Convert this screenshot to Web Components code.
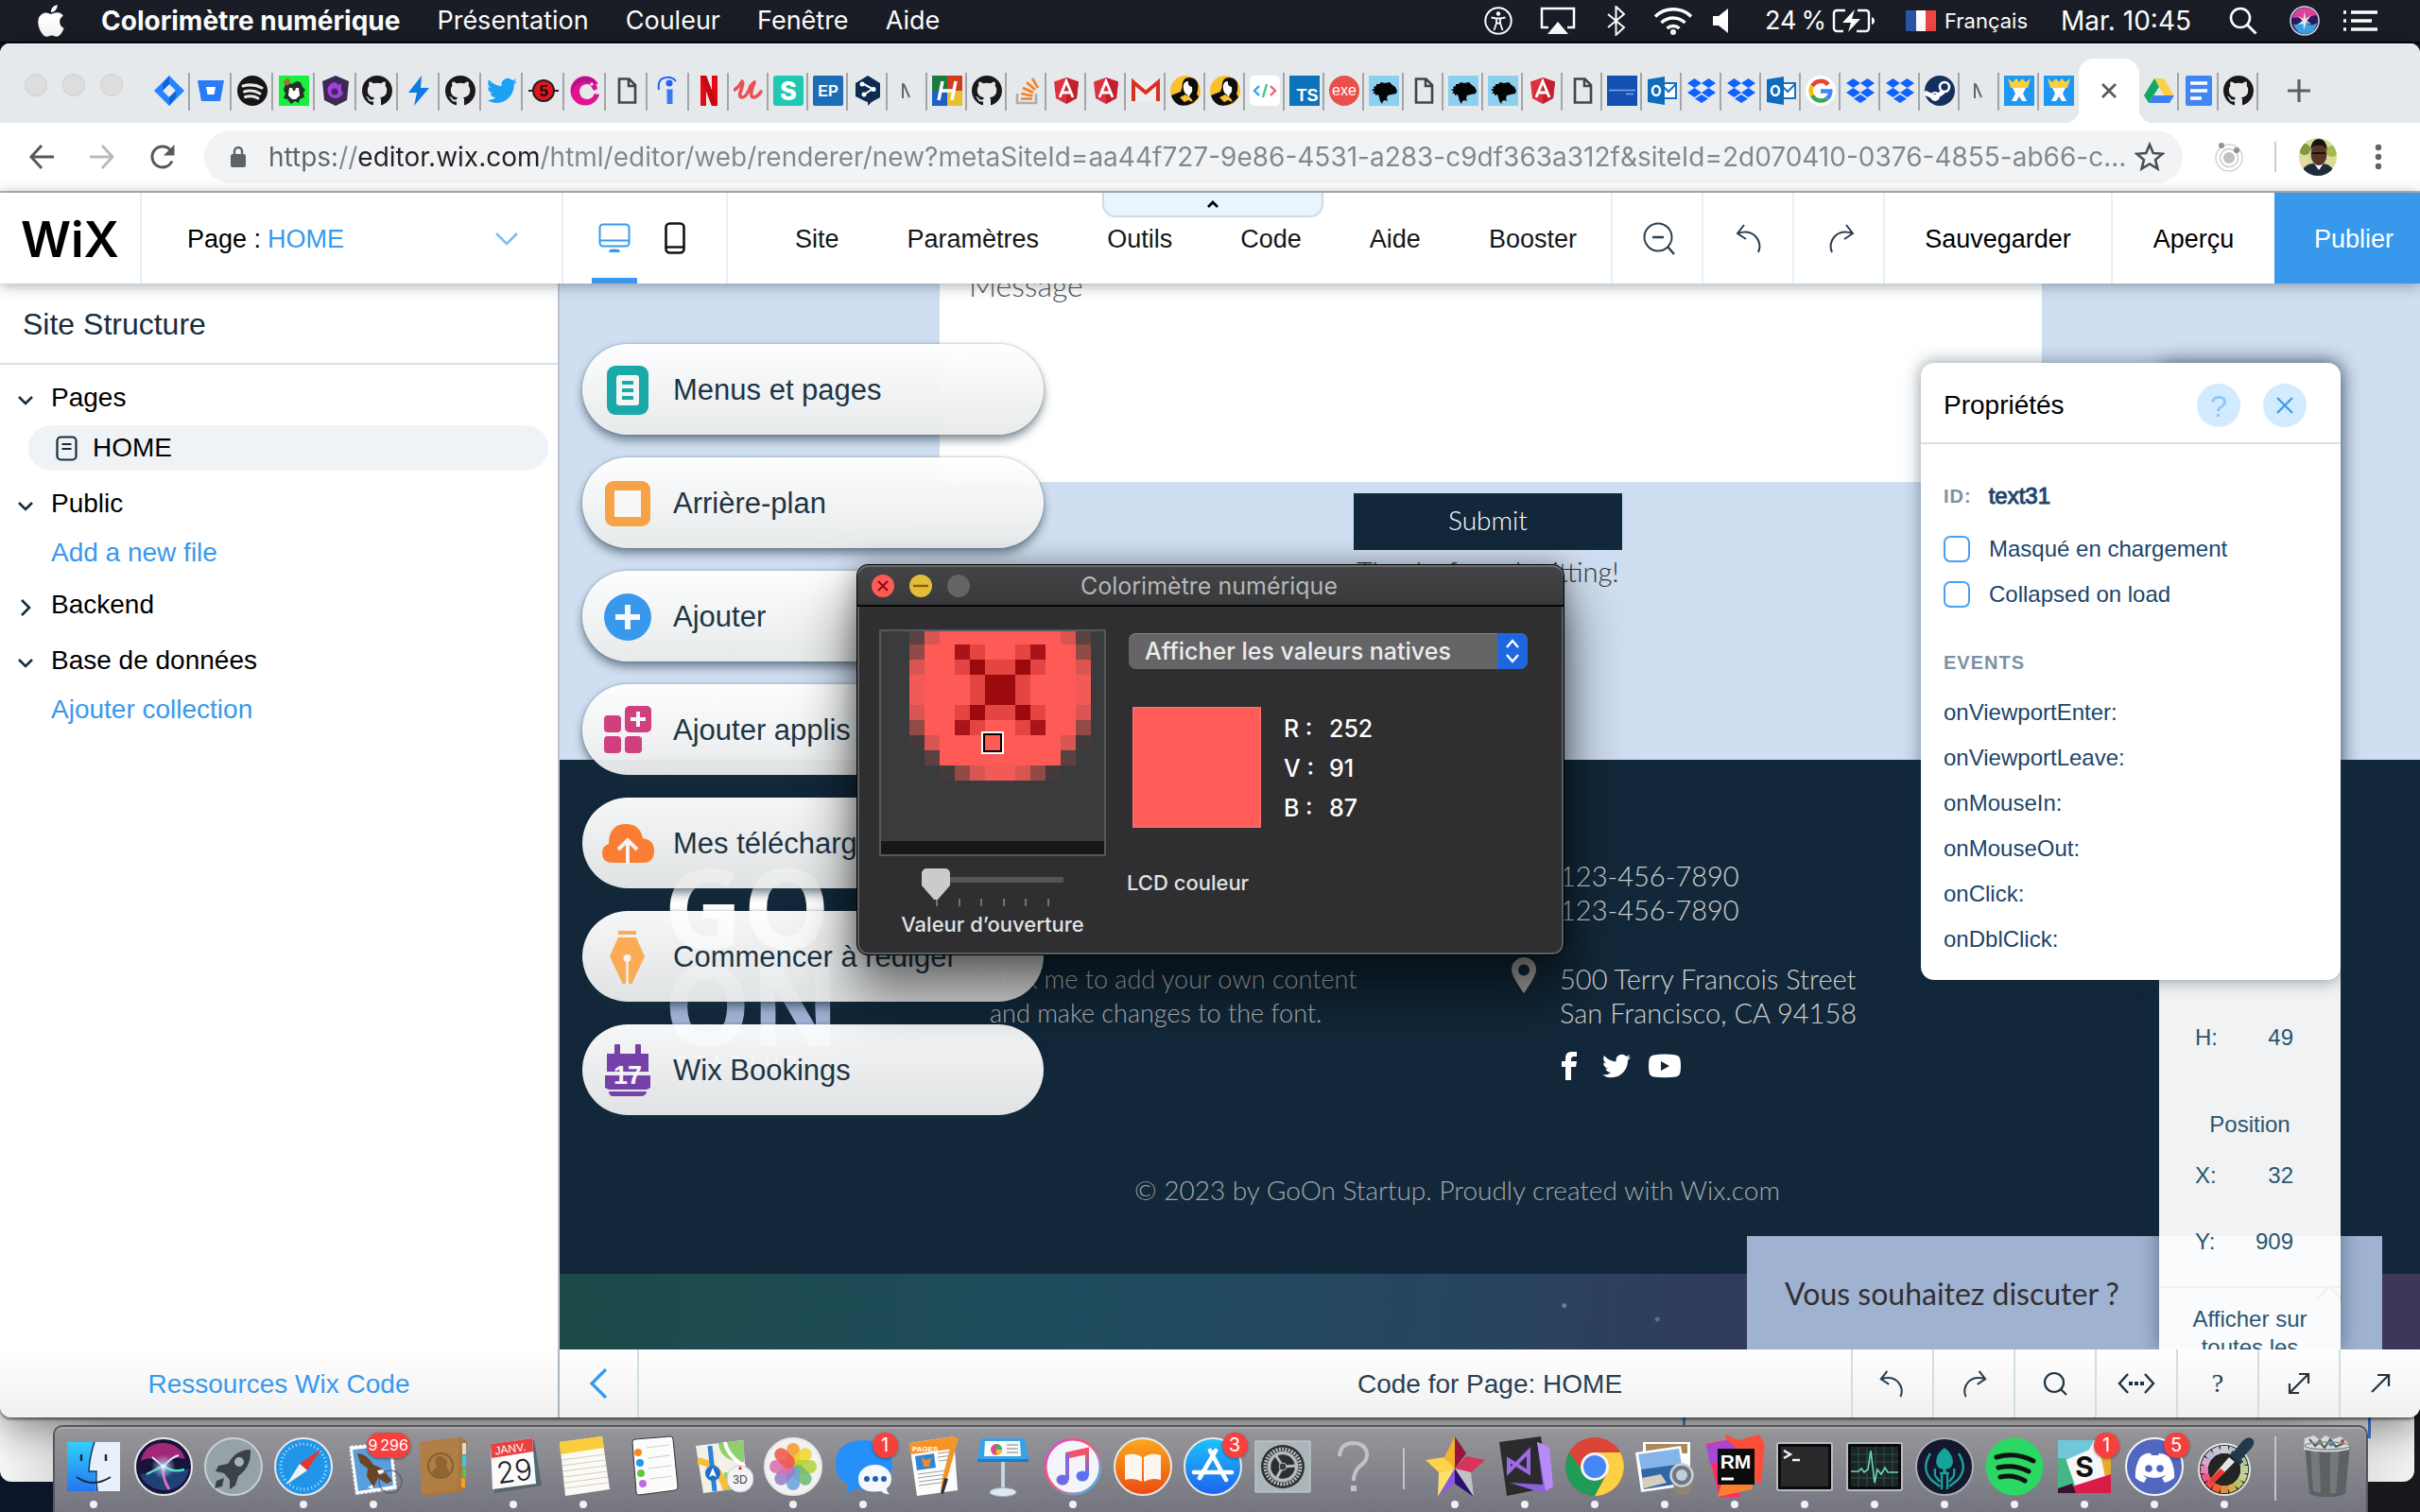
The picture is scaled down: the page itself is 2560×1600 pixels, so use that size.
<!DOCTYPE html>
<html lang="fr">
<head>
<meta charset="utf-8">
<title>Wix Editor</title>
<style>
  html, body { margin: 0; height: 100%; }
  body { overflow: hidden; font-family: "Liberation Sans", Arial, sans-serif; }
</style>
</head>
<body>
<mac-desktop>
  <mac-menubar slot="menubar"></mac-menubar>
  <browser-window slot="browser">
    <tab-strip></tab-strip>
    <address-bar></address-bar>
    <wix-header></wix-header>
    <editor-area></editor-area>
    <code-bar></code-bar>
  </browser-window>
  <color-meter slot="window"></color-meter>
  <mac-dock slot="dock"></mac-dock>
</mac-desktop>

<script>
const GITHUB = 'M8 0C3.58 0 0 3.58 0 8c0 3.54 2.29 6.53 5.47 7.59.4.07.55-.17.55-.38 0-.19-.01-.82-.01-1.49-2.01.37-2.53-.49-2.69-.94-.09-.23-.48-.94-.82-1.13-.28-.15-.68-.52-.01-.53.63-.01 1.08.58 1.23.82.72 1.21 1.87.87 2.33.66.07-.52.28-.87.51-1.07-1.78-.2-3.64-.89-3.64-3.95 0-.87.31-1.59.82-2.15-.08-.2-.36-1.02.08-2.12 0 0 .67-.21 2.2.82.64-.18 1.32-.27 2-.27.68 0 1.36.09 2 .27 1.53-1.04 2.2-.82 2.2-.82.44 1.1.16 1.92.08 2.12.51.56.82 1.27.82 2.15 0 3.07-1.87 3.75-3.65 3.95.29.25.54.73.54 1.48 0 1.07-.01 1.93-.01 2.2 0 .21.15.46.55.38A8.013 8.013 0 0016 8c0-4.42-3.58-8-8-8z';
const TWITTER = 'M23.953 4.57a10 10 0 01-2.825.775 4.958 4.958 0 002.163-2.723c-.951.555-2.005.959-3.127 1.184a4.92 4.92 0 00-8.384 4.482C7.69 8.095 4.067 6.13 1.64 3.162a4.822 4.822 0 00-.666 2.475c0 1.71.87 3.213 2.188 4.096a4.904 4.904 0 01-2.228-.616v.06a4.923 4.923 0 003.946 4.827 4.996 4.996 0 01-2.212.085 4.936 4.936 0 004.604 3.417 9.867 9.867 0 01-6.102 2.105c-.39 0-.779-.023-1.17-.067a13.995 13.995 0 007.557 2.209c9.053 0 13.998-7.496 13.998-13.985 0-.21 0-.42-.015-.63A9.935 9.935 0 0024 4.59z';
const APPLE = 'M12.152 6.896c-.948 0-2.415-1.078-3.96-1.04-2.04.027-3.91 1.183-4.961 3.014-2.117 3.675-.546 9.103 1.519 12.09 1.013 1.454 2.208 3.09 3.792 3.039 1.52-.065 2.09-.987 3.935-.987 1.831 0 2.35.987 3.96.948 1.637-.026 2.676-1.48 3.676-2.948 1.156-1.688 1.636-3.325 1.662-3.415-.039-.013-3.182-1.221-3.22-4.857-.026-3.04 2.48-4.494 2.597-4.559-1.429-2.09-3.623-2.324-4.39-2.376-2-.156-3.675 1.09-4.61 1.09zM15.53 3.83c.843-1.012 1.4-2.427 1.245-3.83-1.207.052-2.662.805-3.532 1.818-.78.896-1.454 2.338-1.273 3.714 1.338.104 2.715-.688 3.559-1.701';

const svg = (w, h, vb, body, extra = '') =>
  `<svg width="${w}" height="${h}" viewBox="${vb}" fill="none" aria-hidden="true" ${extra}>${body}</svg>`;

function define(name, css, html) {
  const tpl = document.createElement('template');
  tpl.innerHTML = `<style>
    :host { display: block; box-sizing: border-box; }
    *, *::before, *::after { box-sizing: border-box; }
    svg { display: block; flex: none; }
    button, input, select { font: inherit; color: inherit; border: 0; margin: 0; padding: 0; background: none; }
    a { color: inherit; text-decoration: none; }
    ${css}</style>${html}`;
  customElements.define(name, class extends HTMLElement {
    constructor() {
      super();
      this.attachShadow({ mode: 'open' }).append(tpl.content.cloneNode(true));
    }
  });
}

/* ---------- desktop ---------- */
define('mac-desktop', `
  :host { position: relative; height: 100vh; background: linear-gradient(90deg, #0b1628 0 50%, #17181b); display: flex; flex-direction: column; overflow: hidden; }
  .back { position: absolute; left: 0; right: 6px; bottom: 32px; height: 90px; border-radius: 0 0 12px 12px;
    background: linear-gradient(90deg, #f6f6f6, #c6c6c6 110px, #c6c6c6 calc(100% - 140px), #f2f2f2); }
  .line { position: absolute; bottom: 78px; height: 26px; width: 3px; background: #3b74d8; }
  .main { position: relative; flex: 1; min-height: 0; margin-bottom: 100px; display: flex; }
  ::slotted(browser-window) { flex: 1; min-width: 0; }
  .dock { position: absolute; left: 56px; right: 55px; bottom: 0; }
  .win { position: absolute; left: 906px; top: 597px; }
`, `
  <div class="back"></div><i class="line" style="left:1780px"></i><i class="line" style="right:52px"></i>
  <slot name="menubar"></slot>
  <div class="main"><slot name="browser"></slot></div>
  <div class="win"><slot name="window"></slot></div>
  <div class="dock"><slot name="dock"></slot></div>
`);

/* ---------- menu bar ---------- */
define('mac-menubar', `
  :host { height: 46px; background: #1a1d26; color: #fff; font: 27px/44px Inter, sans-serif; display: flex; justify-content: space-between; border-bottom: 2px solid #04060c; position: relative; }
  nav, .status { display: flex; align-items: center; }
  nav { padding-left: 40px; gap: 39px; }
  nav b { font-weight: 700; font-size: 28px; }
  .status { padding-right: 45px; }
  .lang { font-size: 22px; }
  .time { font-size: 28px; }
  .flag { width: 32px; height: 22px; background: linear-gradient(90deg, #2b56a5 33%, #fff 33% 66%, #f04545 66%); }
`, `
  <nav>
    ${svg(28, 34, '2 0 20 24', `<path fill="#fff" d="${APPLE}"/>`)}
    <b>Colorimètre numérique</b><span>Présentation</span><span>Couleur</span><span>Fenêtre</span><span>Aide</span>
  </nav>
  <div class="status">
    ${svg(30, 30, '0 0 30 30', '<circle cx="15" cy="15" r="13.700" stroke="#fff" stroke-width="2"/><circle cx="15" cy="7.500" r="2.200" fill="#fff"/><path d="M7.500 11.500l5.500 1v5l-2.500 7.500M22.500 11.500l-5.500 1v5l2.500 7.500M13 12.500h4M13 17.500h4" stroke="#fff" stroke-width="1.800"/>', 'style="margin-right:29px"')}
    ${svg(38, 30, '0 0 38 30', '<path d="M9 22H2V2h34v20h-7" stroke="#fff" stroke-width="2.500"/><path d="M19 16l11 13H8z" fill="#fff"/>', 'style="margin-right:33px"')}
    ${svg(20, 32, '0 0 20 32', '<path d="M1 9l17 14-8.500 8V1L18 9 1 23" stroke="#fff" stroke-width="2"/>', 'style="margin-right:29px"')}
    ${svg(42, 30, '0 0 42 30', '<path d="M2 10.500a27 27 0 0138 0M8.500 17a18 18 0 0125 0M14.500 23a9.500 9.500 0 0113 0" stroke="#fff" stroke-width="3.400"/><circle cx="21" cy="27" r="3" fill="#fff"/>', 'style="margin-right:20px"')}
    ${svg(18, 28, '0 0 18 28', '<path d="M1 9h6l10-8v26L7 19H1z" fill="#fff"/>', 'style="margin-right:38px"')}
    <span style="margin-right:6px">24&#8239;%</span>
    ${svg(46, 26, '0 0 46 26', '<path d="M14 2H5a3 3 0 00-3 3v16a3 3 0 003 3h7M27 2h9a3 3 0 013 3v16a3 3 0 01-3 3H26" stroke="#fff" stroke-width="2.400"/><path d="M42 9q3 1 3 4t-3 4z" fill="#fff"/><path d="M24 1L11 15h9l-3 10 13-14h-9z" fill="#fff"/>', 'style="margin-right:32px"')}
    <i class="flag" style="margin-right:9px"></i>
    <span class="lang" style="margin-right:35px">Français</span>
    <span class="time" style="margin-right:40px">Mar. 10:45</span>
    ${svg(30, 30, '0 0 30 30', '<circle cx="12" cy="12" r="10" stroke="#fff" stroke-width="2.600"/><path d="M19.500 19.500l9 9" stroke="#fff" stroke-width="3"/>', 'style="margin-right:34px"')}
    ${svg(32, 32, '0 0 32 32', '<circle cx="16" cy="16" r="15" fill="#2a1c5a" stroke="#d8d8e8" stroke-width="1.500"/><path d="M3 13q2-10 13-11 10 0 13 8-8 0-13 6-5-5-13-3" fill="#d9449a"/><path d="M4 20q6 0 12-4 6 8 13 2-2 12-13 12-8 0-12-10" fill="#3aa6e8"/><path d="M16 6l1 8 6-4-4.500 6 5 4-6-2L15 26l-.500-7-6 1 5-4-4-5 5 3z" fill="#fff" opacity=".85"/>', 'style="margin-right:25px"')}
    ${svg(36, 22, '0 0 36 22', '<path d="M0 2h3M0 11h3M0 20h3M8 2h28M8 11h22M8 20h28" stroke="#fff" stroke-width="3.600"/>')}
  </div>
`);

/* ---------- browser ---------- */
define('browser-window', `
  :host { display: flex; flex-direction: column; background: #fff; border-radius: 10px 10px 12px 12px; overflow: hidden; box-shadow: 0 2px 3px rgba(0,0,0,.55), 0 12px 40px rgba(0,0,0,.4); }
  ::slotted(editor-area) { flex: 1; min-height: 0; }
`, `<slot></slot>`);

const doc = '<path d="M8 3.500h10.500L25 10v18.500H8z M18 3.500V11h7" stroke="#444" stroke-width="2.600"/>';
const gh = `<g transform="scale(2)"><path fill="#1b1817" d="${GITHUB}"/></g>`;
const ang = '<path d="M16 2l13 4.500-2 17.500L16 30 5 24 3 6.500z" fill="#dd3040"/><path d="M16 2l13 4.500-2 17.500L16 30z" fill="#c3202f"/><path d="M9 23l7-17 7 17M11.500 18h9" stroke="#fff" stroke-width="2.800"/>';
const drop = '<path d="M8.500 3L16 8l-7.500 5L1 8zM23.500 3L31 8l-7.500 5L16 8zM8.500 13L16 18l-7.500 5L1 18zM23.500 13L31 18l-7.500 5L16 18zM16 20l7 4.500-7 4.500-7-4.500z" fill="#0f62fe"/>';
const outl = '<path d="M14 8h17v16H14z" fill="#fff" stroke="#1672c4" stroke-width="2"/><path d="M15 9l8 8 8-8" stroke="#1672c4" stroke-width="2"/><path d="M1 4l18-3v30L1 28z" fill="#0f6cbd"/><ellipse cx="10" cy="16" rx="4" ry="5" stroke="#fff" stroke-width="2.600"/>';
const bird = '<path fill="#8ccfee" d="M0 0h32v32H0z"/><path d="M3 15l3-1-1-2 3-1 0-2 3 0 2-2 4 1 5-1 3 3 3 2 2 4-1 3-5 1-4 1-1 3 1 3-3-1-2 1-1 3-2-3-1-4-1-3-3 1 0-2-3 0 2-2z" fill="#050505"/>';
const nn = '<path d="M11 8v16M12 9l6 14" stroke="#666" stroke-width="2"/>';
const wx = '<path fill="#1e98f5" d="M0 0h32v32H0z"/><path d="M4 3l5 4 4-4 3 4 3-4 4 4 5-4-3 10H7z" fill="#fbd03b"/><path d="M9 13h14l-3 6 4 8h-5l-3-5-3 5H8l4-8z" fill="#fff"/>';
const duo = '<circle cx="16" cy="16" r="16" fill="#fbc02d"/><path d="M1 21l10-4q2-4 2-9 1-6 7-6 7 0 9 6 1 6-1 11l2 4-6 6q-8 4-15 2Q3 28 1 21" fill="#0d0d0d"/><path d="M14 10q1-4 5-4-1 5 4 6 1 4-1 7-3 2-6 0-3-4-2-9z" fill="#fff"/><path d="M10 23l6-3 6 4 2 4-5-2-4 2z" fill="#fbc02d"/><path d="M16 18l5 1-1 4z" fill="#fff"/>';
const t = (s, x, y, size, fill, w = 700, fam = 'Liberation Sans') =>
  `<text x="${x}" y="${y}" font-family="${fam}" font-size="${size}" font-weight="${w}" fill="${fill}" text-anchor="middle">${s}</text>`;
const spot = (c, k) => `<circle cx="16" cy="16" r="16" fill="${c}"/><path d="M6 11q11-3 20 2M7.500 17q9-2.500 16.500 2M8.500 22.500q7.500-2 13.500 1.500" stroke="${k}" stroke-width="3" stroke-linecap="round"/>`;
const WIDE = [
  '<path d="M16 0l16 16-16 16L0 16z" fill="#2684ff"/><path d="M16 9l7 7-7 7-7-7z" fill="#e5e9ec"/><path d="M16 0l-7 9v7l7-7z" fill="#1360d8"/><path d="M16 32l7-9v-7l-7 7z" fill="#1360d8"/>',
  '<path d="M2 5h28l-4 22H6z" fill="#2a7bf5"/><path d="M11 12h10l-1.500 8h-7z" fill="#fff"/>',
  spot('#191414', '#e5e9ec'),
  '<path fill="#19f03c" d="M0 0h32v32H0z"/><path d="M8 6l5 3 6-3 4 1 2 5 3 3-2 3 1 5-5 2-1 4-4-2-4 3-4-5-4-1 2-5-2-4z" fill="#26302a"/><path d="M11 13h3l1 3h2l1-3h3l1 8-4 4h-4l-4-4z" fill="#fff"/><path d="M4 7l6-5 2 6-3 3z" fill="#a86a3c"/>',
  '<path d="M16 0l14 6-2 20-12 6L4 26 2 6z" fill="#3c2a55"/><path d="M16 7a8.500 8.500 0 108 11l-2-2V8l-3 2z" fill="#a63ee0"/><circle cx="15" cy="17" r="3.500" fill="#3c2a55"/>',
  gh,
  '<path d="M19 0L5 18h9l-3 14 16-19h-9z" fill="#0f7be0"/>',
  gh,
  `<g transform="scale(1.333)"><path fill="#1da1f2" d="${TWITTER}"/></g>`,
  `<path d="M0 16h32" stroke="#222" stroke-width="2"/><circle cx="16" cy="16" r="11" fill="#e6141e" stroke="#222" stroke-width="2"/>${t('5', 16, 22, 17, '#111')}`,
  '<circle cx="16" cy="16" r="15.500" fill="#e0148c"/><path d="M24 3q-9-5-17 2-6 6-6 13 6-12 15-11 6 1 8 6 6-5 0-10" fill="#b5118a"/><circle cx="18" cy="17" r="8" fill="#e5e9ec"/><path d="M22 11l10-3 1 12-8-1z" fill="#e5e9ec"/><path d="M18 6q10-1 11 8l-4 2-3-5z" fill="#d4149a"/><circle cx="23" cy="9" r="1.500" fill="#fff"/>',
  doc,
  '<circle cx="17" cy="8" r="3.500" fill="#2164f3"/><path d="M14.500 14q3 1 6 0v16h-6z" fill="#3a78f5"/><path d="M6 15Q4 3 14 2q6-1 10 4" stroke="#2164f3" stroke-width="2"/>',
];
const NARROW = [
  '<path d="M7 0h6l12 32h-6z" fill="#b1060f"/><path d="M7 0h6v32H7zM19 0h6v32h-6z" fill="#e50914"/><path d="M7 0h6l12 32h-6z" fill="#c40812"/>',
  '<path d="M1 15q5-3 8-9 2 1-1 9-3 8 1 8 5 0 9-12l4-4q-6 15-1 16 4 0 8-6" stroke="#ea5252" stroke-width="3.600" stroke-linecap="round" stroke-linejoin="round"/>',
  `<rect width="32" height="32" rx="3" fill="#1fc8b0"/>${t('S', 16, 26, 27, '#fff', 800, 'Inter')}`,
  `<rect width="32" height="32" rx="2" fill="#1c6db5"/>${t('EP', 16, 22, 16, '#fff')}`,
  '<path d="M16 0l13 8v15l-9 5-4 4v-4l-3-1L3 22V8z" fill="#0d2b4e"/><path d="M10 8l11 6-9 6" stroke="#fff" stroke-width="2"/><circle cx="10" cy="9" r="2.500" fill="#fff"/><circle cx="22" cy="14.500" r="2.500" fill="#fff"/><circle cx="12" cy="20" r="2.500" fill="#fff"/>',
  nn,
  '<path fill="#1b7b3f" d="M0 0h16v16H0z"/><path fill="#d23a22" d="M16 0h16v16H16z"/><path fill="#1d5fc4" d="M0 16h16v16H0z"/><path fill="#eac02c" d="M16 16h16v16H16z"/><path d="M11 6L7 26M25 6l-4 20M9 16h14" stroke="#fff" stroke-width="3.500"/>',
  gh,
  '<path d="M6 19v10h20V19" stroke="#aaadb0" stroke-width="2.600"/><path d="M10 24.500h12M10.500 19l12 2.500M12 13l11 5M16 7l9 8M22 3l6 10" stroke="#f48024" stroke-width="2.600"/>',
  ang, ang,
  '<path d="M2 6h28v21H2z" fill="#eee"/><path d="M3 27V7l13 11L29 7v20" stroke="#d93025" stroke-width="4"/>',
  duo, duo,
  '<rect width="32" height="32" rx="5" fill="#fff"/><path d="M10 11l-5 5 5 5" stroke="#2fa8e0" stroke-width="2.400"/><path d="M18 9l-4 14" stroke="#42c98a" stroke-width="2.400"/><path d="M22 11l5 5-5 5" stroke="#f4606e" stroke-width="2.400"/>',
  `<path fill="#0d72b9" d="M0 0h32v32H0z"/>${t('TS', 19, 27, 18, '#fff')}`,
  `<circle cx="16" cy="16" r="16" fill="#e9504a"/>${t('exe', 16, 21, 16, '#fff', 400)}`,
  bird, doc, bird, bird, ang, doc,
  '<path fill="#1450b4" d="M0 0h32v32H0z"/><path d="M2 15.500h28M20 19.500h8" stroke="#7fa6e4" stroke-width="1.500"/>',
  outl, drop, drop, outl,
  '<circle cx="16" cy="16" r="16" fill="#fff"/><path d="M24 9.500A10.500 10.500 0 007 11" stroke="#ea4335" stroke-width="4.500"/><path d="M7 11a10.500 10.500 0 000 10" stroke="#fbbc05" stroke-width="4.500"/><path d="M7 21a10.500 10.500 0 0015.500 3.500" stroke="#34a853" stroke-width="4.500"/><path d="M22.500 24.500a10.500 10.500 0 003.800-8H16" stroke="#4285f4" stroke-width="4.500"/>',
  drop, drop,
  '<circle cx="16" cy="16" r="16" fill="#15305e"/><path d="M0 18l11 5 9-6" stroke="#fff" stroke-width="5"/><circle cx="21" cy="12" r="5" stroke="#fff" stroke-width="2.600"/><circle cx="11" cy="22" r="4" stroke="#fff" stroke-width="2"/>',
  nn, wx, wx,
];
const LAST = [
  '<path d="M11 3h10l11 18H21z" fill="#ffcf48"/><path d="M11 3l5 9L5 29 0 21z" fill="#11a861"/><path d="M10 21h22l-5 8H5z" fill="#3d7ff0"/>',
  '<rect x="2" width="28" height="32" rx="2" fill="#4285f4"/><path d="M7 8h18M7 16h18M7 24h12" stroke="#fff" stroke-width="3.500"/>',
  gh,
];
const tab = (cls) => (g) => `<div class="tab ${cls}" role="tab">${svg(32, 32, '0 0 32 32', g)}</div>`;

define('tab-strip', `
  :host { background: #e5e9ec; height: 84px; display: flex; align-items: flex-end; position: relative; border-top: 1px solid #f8f9fa; }
  .lights { display: flex; gap: 16px; padding: 0 27px 28px 26px; }
  .lights i { width: 24px; height: 24px; border-radius: 50%; background: #dddddd; border: 1px solid #cfcfcf; }
  .tabs { display: flex; align-items: flex-end; }
  .tab { height: 68px; display: flex; align-items: center; justify-content: center; width: 42px; position: relative; }
  .w { width: 44px; }
  .tab::after { content: ""; position: absolute; right: 0; top: 15px; height: 40px; width: 2px; background: #a3a6a9; }
  .last::after { display: none; }
  .active { width: 64px; height: 68px; background: #fff; border-radius: 16px 16px 0 0; }
  .active::before, .active::after { content: ""; position: absolute; width: 14px; height: 14px; bottom: 0; top: auto; background: radial-gradient(circle at 0 0, transparent 14px, #fff 14px); left: -14px; }
  .active::after { left: auto; right: -14px; background: radial-gradient(circle at 100% 0, transparent 14px, #fff 14px); }
  .new { height: 68px; width: 86px; display: grid; place-items: center; }
`, `
  <div class="lights"><i></i><i></i><i></i></div>
  <div class="tabs" role="tablist">
    ${WIDE.map(tab('w')).join('')}${NARROW.slice(0, -1).map(tab('')).join('')}${tab('last')(NARROW.at(-1))}
    <div class="tab active" role="tab">${svg(20, 20, '0 0 20 20', '<path d="M3 3l14 14M17 3L3 17" stroke="#555b60" stroke-width="2.800"/>')}</div>
    ${LAST.map(tab('')).join('')}
  </div>
  <button class="new" aria-label="Nouvel onglet">${svg(26, 26, '0 0 26 26', '<path d="M13 1v24M1 13h24" stroke="#5b6064" stroke-width="3.200"/>')}</button>
`);

define('address-bar', `
  :host { height: 74px; display: flex; align-items: center; border-bottom: 2px solid #b5b7b9; padding-left: 28px; }
  button { display: grid; place-items: center; width: 32px; height: 40px; margin-right: 32px; }
  .pill { flex: 1; margin-left: -4px; height: 56px; border-radius: 28px; background: #f1f3f4; display: flex; align-items: center; padding: 0 19px 0 27px; }
  input { flex: 1; min-width: 0; height: 50px; margin-left: 23px; font: 28px Inter, sans-serif; color: #80868b; outline: 0;
    -webkit-text-fill-color: transparent; background: linear-gradient(90deg, #5f6368 0 71px, #80868b 71px 94px, #202124 94px 287px, #80868b 287px); -webkit-background-clip: text; background-clip: text; }
  .pill button { margin: 0; }
  .ext { margin: 0 31px 0 32px; }
  .bar { width: 2px; height: 32px; background: #c9ccd0; margin-right: 24px; }
  .menu { width: 60px; margin: 0 14px; }
`, `
  <button aria-label="Retour">${svg(28, 28, '0 0 28 28', '<path d="M27 14H3M14 2L3 14l11 12" stroke="#55595e" stroke-width="3"/>')}</button>
  <button aria-label="Avancer">${svg(28, 28, '0 0 28 28', '<path d="M1 14h24M14 2l11 12-11 12" stroke="#b9bcbf" stroke-width="3"/>')}</button>
  <button aria-label="Actualiser">${svg(28, 28, '0 0 28 28', '<path d="M24 18.500A11 11 0 1122.500 7" stroke="#55595e" stroke-width="3"/><path d="M26.500 1v11.500H15z" fill="#55595e"/>')}</button>
  <div class="pill">
    ${svg(18, 24, '0 0 18 24', '<rect x="1" y="9" width="16" height="14" rx="2" fill="#5f6368"/><path d="M5 10V6a4 4 0 018 0v4" stroke="#5f6368" stroke-width="2.400"/>')}
    <input type="text" aria-label="Adresse" value="https://editor.wix.com/html/editor/web/renderer/new?metaSiteId=aa44f727-9e86-4531-a283-c9df363a312f&amp;siteId=2d070410-0376-4855-ab66-c...">
    <button aria-label="Favori">${svg(32, 32, '0 0 32 32', '<path d="M16 3l3.800 9 9.700.8-7.400 6.300 2.300 9.500L16 23.500l-8.400 5.100 2.300-9.500-7.400-6.300 9.700-.8z" stroke="#4a4e52" stroke-width="2.600"/>')}</button>
  </div>
  <span class="ext">${svg(34, 34, '0 0 34 34', '<circle cx="17" cy="18" r="14" stroke="#d3d5d7" stroke-width="1.500"/><circle cx="17" cy="18" r="9.500" stroke="#c9cbcd" stroke-width="1.500"/><circle cx="17" cy="18" r="6" fill="#bfc1c3"/><circle cx="9" cy="5" r="3" fill="#8f9295"/><circle cx="25" cy="10" r="3" fill="#8f9295"/>')}</span>
  <i class="bar"></i>
  ${svg(40, 40, '0 0 40 40', '<defs><clipPath id="a"><circle cx="20" cy="20" r="20"/></clipPath></defs><g clip-path="url(#a)"><path fill="#d6dd9a" d="M0 0h40v40H0z"/><circle cx="6" cy="12" r="6" fill="#7f9a3c"/><circle cx="35" cy="14" r="6" fill="#a9b84e"/><circle cx="4" cy="25" r="5" fill="#ead9a9"/><path d="M2 40q2-12 12-13h12q10 1 12 13z" fill="#202b3d"/><path d="M16 27l5 7 5-7z" fill="#fff"/><ellipse cx="21" cy="17" rx="8.500" ry="12" fill="#573425"/><path d="M12 13q1-12 9-12t9 12q-4-6-9-5-6-1-9 5" fill="#1a1311"/><path d="M14 16h14" stroke="#1a1210" stroke-width="2"/></g>')}
  <button class="menu" aria-label="Menu">${svg(8, 28, '0 0 8 28', '<circle cx="4" cy="4" r="3.200" fill="#5f6368"/><circle cx="4" cy="14" r="3.200" fill="#5f6368"/><circle cx="4" cy="24" r="3.200" fill="#5f6368"/>')}</button>
`);

/* ---------- Wix header ---------- */
const undo = (s = 32, w = 2) => svg(s, s, '0 0 32 32', `<path d="M10 2L3 11l9 6M3 11q12-4 19 3 7 8 3 17" stroke="#2b3f50" stroke-width="${w}"/>`);
const redo = (s = 32, w = 2) => svg(s, s, '0 0 32 32', `<path d="M22 2l7 9-9 6M29 11q-12-4-19 3-7 8-3 17" stroke="#2b3f50" stroke-width="${w}"/>`);
define('wix-header', `
  :host { height: 96px; display: flex; font-size: 27px; color: #000; position: relative; z-index: 3; background: #fff; box-shadow: 0 2px 14px rgba(22,45,61,.4); }
  .cell { border-right: 2px solid #e4f0fa; display: flex; align-items: center; justify-content: center; height: 100%; }
  .logo { width: 150px; }
  .page { width: 446px; justify-content: flex-start; padding: 2px 45px 0 48px; }
  .page em { font-style: normal; color: #3899ec; margin-left: 7px; flex: 1; text-align: left; }
  .dev { width: 174px; gap: 29px; padding-left: 30px; justify-content: flex-start; }
  .dev button { height: 96px; display: flex; align-items: center; }
  .dev .on { border-bottom: 6px solid #3899ec; padding: 6px 7px 0 7px; width: 48px; }
  nav { flex: 1; display: flex; align-items: center; justify-content: space-between; padding: 2px 36px 0 71px; border-right: 2px solid #e4f0fa; color: #161616; }
  .ic { width: 96px; padding-left: 4px; }
  .save { width: 241px; padding-top: 2px; } .prev { width: 171px; border: 0; padding-top: 2px; }
  .pub { width: 154px; background: #3899ec; color: #fff; padding: 2px 0 0 14px; border: 0; }
  .fold { position: absolute; left: 50%; top: 0; width: 234px; height: 26px; margin-left: -114px; background: #e8f5ff; border: 2px solid #ccdae6; border-top: 0; border-radius: 0 0 14px 14px; display: grid; place-items: center; }
`, `
  <div class="cell logo">${svg(120, 76, '0 0 120 76', '<text x="60" y="58" font-family="Inter" font-size="52" font-weight="600" fill="#000" text-anchor="middle">WiX</text>')}</div>
  <button class="cell page"><span>Page :</span><em>HOME</em>${svg(26, 16, '0 0 26 16', '<path d="M2 2l11 11L24 2" stroke="#7bbcf3" stroke-width="2.600"/>')}</button>
  <div class="cell dev">
    <button class="on" aria-label="Bureau">${svg(34, 32, '0 0 34 32', '<rect x="1.500" y="1.500" width="31" height="23" rx="3.500" stroke="#3899ec" stroke-width="2"/><path d="M2 18.500h30" stroke="#3899ec" stroke-width="2"/><path d="M12 28q5-1 10 0l1 3H11z" fill="#3899ec"/>')}</button>
    <button class="off" aria-label="Mobile">${svg(22, 34, '0 0 22 34', '<rect x="1.500" y="1.500" width="19" height="31" rx="4" stroke="#111" stroke-width="2.600"/><path d="M2 26.500h18" stroke="#111" stroke-width="2.400"/>')}</button>
  </div>
  <nav><button>Site</button><button>Paramètres</button><button>Outils</button><button>Code</button><button>Aide</button><button>Booster</button></nav>
  <button class="cell ic" aria-label="Zoom">${svg(36, 36, '0 0 36 36', '<circle cx="17" cy="17" r="14.500" stroke="#2b3f50" stroke-width="2"/><path d="M11 17h12M27.500 27.500L34 35" stroke="#2b3f50" stroke-width="2.400"/>')}</button>
  <button class="cell ic" aria-label="Annuler">${undo()}</button>
  <button class="cell ic" aria-label="Rétablir">${redo()}</button>
  <button class="cell save">Sauvegarder</button>
  <button class="cell prev">Aperçu</button>
  <button class="cell pub">Publier</button>
  <button class="fold" aria-label="Replier">${svg(16, 10, '0 0 16 10', '<path d="M3 8l5-5 5 5" stroke="#000" stroke-width="2.800"/>')}</button>
`);

/* ---------- editor area ---------- */
define('editor-area', `
  :host { display: flex; position: relative; }
  site-tree { width: 592px; border-right: 2px solid #b9c4d0; flex: none; }
  site-canvas { flex: 1; min-width: 0; }
`, `<site-tree></site-tree><site-canvas></site-canvas>`);

const down = svg(18, 12, '0 0 18 12', '<path d="M2 2l7 7 7-7" stroke="#162d3d" stroke-width="2.600"/>');
const right = svg(18, 18, '0 0 18 18', '<path d="M5 1l8 8-8 8" stroke="#162d3d" stroke-width="2.600"/>');
define('site-tree', `
  :host { background: #fff; font-size: 28px; line-height: 32px; color: #000; }
  h2 { margin: 0; font-size: 32px; font-weight: 400; color: #162d3d; height: 86px; line-height: 86px; padding-left: 24px; border-bottom: 2px solid #d9e1e8; }
  ul { list-style: none; margin: 0; padding: 0; }
  .g { display: flex; align-items: center; height: 48px; padding-left: 18px; gap: 18px; }
  .g svg { margin-top: 6px; }
  .file { margin: 5px 10px 0 30px; height: 48px; border-radius: 24px; background: #eff3f6; display: flex; align-items: center; padding-left: 29px; gap: 16px; }
  .add { display: block; color: #3899ec; padding-left: 54px; height: 40px; line-height: 40px; margin-top: 8px; }
  li { padding-top: 11px; }
`, `
  <h2>Site Structure</h2>
  <ul>
    <li><div class="g">${down}Pages</div>
      <a class="file" href="#">${svg(23, 27, '0 0 23 27', '<rect x="1.500" y="1.500" width="20" height="24" rx="4" stroke="#162d3d" stroke-width="2.200"/><path d="M6.500 9h10M6.500 14h10" stroke="#162d3d" stroke-width="2.200"/>')}HOME</a></li>
    <li><div class="g">${down}Public</div><a class="add" href="#">Add a new file</a></li>
    <li><div class="g">${right}Backend</div></li>
    <li><div class="g">${down}Base de données</div><a class="add" href="#">Ajouter collection</a></li>
  </ul>
`);

define('tool-pill', `
  :host { display: block; }
  button { width: 488px; height: 96px; border-radius: 48px; display: flex; align-items: center; font-size: 31px; color: #1d3444; text-align: left;
    background: linear-gradient(rgba(255,255,255,.96), rgba(232,234,234,.96)); box-shadow: 0 6px 10px rgba(22,45,61,.5), 0 0 3px rgba(22,45,61,.35); padding: 2px 0 0; }
  .i { width: 96px; display: grid; place-items: center; }
`, `<button><span class="i"><slot name="icon"></slot></span><slot></slot></button>`);

const pill = (icon, label) => `<tool-pill><span slot="icon">${svg(56, 56, '0 0 56 56', icon)}</span>${label}</tool-pill>`;
define('site-canvas', `
  :host { display: flex; flex-direction: column; position: relative; overflow: hidden; background: #cfdef0; font-family: Lato, sans-serif; }
  .form { height: 504px; flex: none; display: flex; flex-direction: column; }
  .field { margin: 0 400px 0 402px; height: 210px; background: #fff; padding-left: 31px; color: #555; font-size: 32px; line-height: 40px; }
  .field label { display: block; margin-top: -18px; font-weight: 300; }
  .submit { align-self: flex-end; margin: 12px 844px 0 0; width: 284px; text-align: center; }
  .submit button { display: block; width: 284px; height: 60px; background: #12283a; color: #fff; font-size: 28px; line-height: 56px; padding-bottom: 4px; font-weight: 300; }
  .submit p { margin: 3px 0; font-size: 29px; line-height: 40px; color: #333; font-weight: 300; white-space: nowrap; }
  footer { height: 544px; flex: none; background: #12283a; color: #d0d0d0; font-size: 29px; line-height: 36px; font-weight: 300; display: grid; grid-template: 406px 1fr / 342px 565px 1fr; padding: 0 0 0 113px; }
  .brand { font: 700 116px/103px "Open Sans", sans-serif; color: #fff; padding-top: 104px; margin-left: -3px; }
  .brand i { display: block; font-style: normal; color: #9fb1d2; }
  .brand small { display: block; font-size: 20px; line-height: 20px; letter-spacing: 7px; font-weight: 400; padding-left: 14px; }
  .txt { padding: 214px 0 0 0; font-size: 27px; color: #b8b8b8; }
  .contact { padding: 105px 0 0 38px; }
  .contact p, .txt p { margin: 0; white-space: nowrap; }
  .addr { position: relative; margin-top: 37px !important; }
  .addr svg { position: absolute; left: -52px; top: -5px; }
  .soc { display: flex; gap: 19px; margin-top: 22px; align-items: center; }
  .soc svg:first-child { margin-right: 6px; }
  .copy { grid-column: 1 / -1; text-align: center; font-size: 28px; color: #a4a8ab; padding: 31px 0 0; margin: 0 0 0 -182px; }
  .hero { flex: 1; background: radial-gradient(circle at 54% 42%, #5c8a86 0 2px, transparent 3px), radial-gradient(circle at 59% 60%, #50708a 0 2px, transparent 3px), linear-gradient(95deg, #1c4a48, #1f4c5e 28%, #27455f 48%, #32395a 66%, #3f3757 90%); }
  .tools { position: absolute; left: 24px; top: 64px; display: grid; gap: 24px; font-family: "Liberation Sans", sans-serif; }
  .chat { position: absolute; right: 40px; bottom: 0; width: 672px; height: 120px; background: #a0b2d1; color: #303030; font-size: 32px; line-height: 122px; padding: 0 42px 0 40px; display: flex; justify-content: space-between; }
  .chat svg { margin-top: 50px; }
  .insp { position: absolute; right: 84px; top: 84px; bottom: 0; width: 192px; border-radius: 14px 14px 0 0; background: rgba(255,255,255,.94); box-shadow: 0 0 20px rgba(22,45,61,.5); font: 24px/30px "Liberation Sans", sans-serif; color: #2b5672; padding-top: 699px; overflow: hidden; }
  .insp label { display: flex; padding: 0 50px 0 38px; justify-content: space-between; height: 30px; }
  .insp input { width: 60px; text-align: right; height: 30px; }
  .insp p { margin: 0; text-align: center; }
  .insp hr { border: 0; border-top: 2px solid #f0f1f3; margin: 32px 0 18px; }
  props-panel { position: absolute; right: 84px; top: 84px; width: 444px; }
`, `
  <section class="form">
    <div class="field"><label>Message</label></div>
    <div class="submit"><button>Submit</button><p>Thanks for submitting!</p></div>
  </section>
  <footer>
    <div class="brand">GO<i>ON</i><small>STARTUP</small></div>
    <div class="txt"><p>click me to add your own content</p><p>and make changes to the font.</p></div>
    <div class="contact">
      <p>123-456-7890</p><p>123-456-7890</p>
      <p class="addr">${svg(28, 38, '0 0 28 38', '<path fill-rule="evenodd" fill="#a8a8a8" d="M14 0a13 13 0 0113 13q0 7-13 25Q1 20 1 13A13 13 0 0114 0m0 7.500a6 6 0 100 12 6 6 0 000-12"/>')}500 Terry Francois Street</p>
      <p>San Francisco, CA 94158</p>
      <div class="soc">
        ${svg(20, 32, '0 0 20 32', '<path fill="#fff" d="M6 31V17H2v-6h4V8q0-7 6-7h6v5h-3q-3 0-3 3v2h6l-1 6h-5v14z"/>')}
        ${svg(30, 28, '0 1 24 22', `<path fill="#fff" d="${TWITTER}"/>`)}
        ${svg(34, 26, '0 0 34 26', '<path fill="#fff" fill-rule="evenodd" d="M5 1.500q12-2 24 0 4 1 4.500 5 1 6.500 0 13-.5 4-4.500 5-12 1.500-24 0-4-1-4.500-5-1-6.500 0-13 .5-4 4.500-5M13 8v10l9-5z"/>')}
      </div>
    </div>
    <p class="copy">© 2023 by GoOn Startup. Proudly created with Wix.com</p>
  </footer>
  <div class="hero"></div>
  <div class="tools">
    ${pill('<rect x="6" y="2" width="44" height="52" rx="9" fill="#1aa9a9"/><rect x="16" y="12" width="24" height="32" rx="3" fill="#f4f6f6"/><path d="M22 20h12M22 28h12M22 36h12" stroke="#1aa9a9" stroke-width="4"/>', 'Menus et pages')}
    ${pill('<rect x="4" y="4" width="48" height="48" rx="9" fill="#f7a247"/><rect x="14" y="14" width="28" height="28" fill="#f8f8f8"/>', 'Arrière-plan')}
    ${pill('<circle cx="28" cy="28" r="25" fill="#3899ec"/><path d="M28 15v26M15 28h26" stroke="#f6f8fa" stroke-width="6"/>', 'Ajouter')}
    ${pill('<rect x="3" y="12" width="18" height="18" rx="4" fill="#d0407e"/><rect x="25" y="2" width="28" height="28" rx="5" fill="#d0407e"/><rect x="3" y="34" width="18" height="18" rx="4" fill="#d0407e"/><rect x="25" y="34" width="18" height="18" rx="4" fill="#d0407e"/><path d="M39 8v16M31 16h16" stroke="#f4f6f6" stroke-width="4"/>', 'Ajouter applis')}
    ${pill('<path d="M13 48Q1 48 1 38q0-8 7-10Q8 7 26 7q15 0 18 15 12 2 12 13 0 13-12 13z" fill="#fb7d33"/><path d="M28 49V26M18 34l10-10 10 10" stroke="#f4f4f2" stroke-width="4"/>', 'Mes téléchargements')}
    ${pill('<path d="M18 0h19v4H18zM18 7h19l9 20-15 32h-7L9 27z" fill="#fbab55"/><path d="M27.500 58V32" stroke="#f4f4f2" stroke-width="2.500"/><circle cx="27.500" cy="29" r="4" fill="#f4f4f2"/>', 'Commencer à rédiger')}
    ${pill('<path d="M6 10h44v19H6zM4 33h48v13l-4 2H8l-4-2zM8 50h40q0 4-5 5H13q-5 0-5-5" fill="#7540a8"/><path d="M17 2v12M39 2v12" stroke="#7540a8" stroke-width="6" stroke-linecap="round"/><text x="28" y="42" font-family="Liberation Sans" font-size="27" font-weight="700" fill="#f6f6f8" text-anchor="middle">17</text>', 'Wix Bookings')}
  </div>
  <div class="chat">Vous souhaitez discuter ?${svg(28, 18, '0 0 28 18', '<path d="M2 16L14 3l12 13" stroke="#222" stroke-width="2.400"/>')}</div>
  <div class="insp">
    <label>H:<input value="49"></label>
    <p style="margin-top:62px">Position</p>
    <label style="margin-top:24px">X:<input value="32"></label>
    <label style="margin-top:40px">Y:<input value="909"></label>
    <hr>
    <p>Afficher sur<br>toutes les</p>
  </div>
  <props-panel></props-panel>
`);

define('props-panel', `
  :host { background: #fff; border-radius: 14px; height: 653px; box-shadow: 0 0 18px rgba(22,45,61,.5); font: 24px/48px "Liberation Sans", sans-serif; color: #20456a; }
  header { height: 86px; border-bottom: 2px solid #d5dfe8; display: flex; align-items: center; padding: 5px 36px 0 24px; color: #000; font-size: 28px; }
  h3 { font: inherit; margin: 0; flex: 1; }
  header button { width: 46px; height: 46px; border-radius: 50%; background: #d3ebff; margin-left: 24px; display: grid; place-items: center; color: #8cc5f6; font-size: 32px; }
  .b { padding: 31px 24px 0; }
  .k { font-size: 20px; font-weight: 700; color: #7a92a5; letter-spacing: 1px; }
  .id { display: flex; gap: 18px; margin-bottom: 8px; }
  .id b { font-weight: 400; -webkit-text-stroke: 1px #20456a; }
  .chk { display: flex; align-items: center; gap: 20px; height: 48px; }
  input { appearance: none; width: 28px; height: 28px; border: 2px solid #4a9ff0; border-radius: 7px; margin: 0; }
  .ev { margin: 24px 0 5px; height: 48px; }
  ul { margin: 0; padding: 0; list-style: none; }
`, `
  <header><h3>Propriétés</h3><button aria-label="Aide">?</button><button aria-label="Fermer">${svg(20, 20, '0 0 20 20', '<path d="M2 2l16 16M18 2L2 18" stroke="#3899ec" stroke-width="2.200"/>')}</button></header>
  <div class="b">
    <div class="id"><span class="k">ID:</span><b>text31</b></div>
    <label class="chk"><input type="checkbox">Masqué en chargement</label>
    <label class="chk"><input type="checkbox">Collapsed on load</label>
    <div class="k ev">EVENTS</div>
    <ul><li>onViewportEnter:</li><li>onViewportLeave:</li><li>onMouseIn:</li><li>onMouseOut:</li><li>onClick:</li><li>onDblClick:</li></ul>
  </div>
`);

/* ---------- code bar ---------- */
define('code-bar', `
  :host { height: 72px; flex: none; background: linear-gradient(#fff, #f0f0f0); display: flex; font-size: 28px; color: #2b3f50; position: relative; z-index: 2; }
  .res { width: 592px; border-right: 2px solid #a9b5c0; display: grid; place-items: center; color: #3899ec; padding-top: 2px; }
  button { width: 86px; display: grid; place-items: center; border-left: 2px solid #d0dde5; font: 28px "Liberation Serif", serif; }
  .back { width: 84px; border-left: 0; border-right: 2px solid #d0dde5; }
  .t { flex: 1; text-align: center; line-height: 73px; padding-left: 518px; }
`, `
  <a class="res" href="#">Ressources Wix Code</a>
  <button class="back" aria-label="Précédent">${svg(22, 34, '0 0 22 34', '<path d="M19 2L4 17l15 15" stroke="#3899ec" stroke-width="3.200"/>')}</button>
  <div class="t">Code for Page: HOME</div>
  <button aria-label="Annuler">${undo(30, 2.2)}</button>
  <button aria-label="Rétablir">${redo(30, 2.2)}</button>
  <button aria-label="Rechercher">${svg(26, 26, '0 0 26 26', '<circle cx="12" cy="12" r="10" stroke="#22323f" stroke-width="2.200"/><path d="M19 19l6 6" stroke="#22323f" stroke-width="2.200"/>')}</button>
  <button aria-label="Code">${svg(40, 24, '0 0 40 24', '<path d="M11 2L2 12l9 10M29 2l9 10-9 10" stroke="#22323f" stroke-width="2.400"/><path d="M12 12h16" stroke="#22323f" stroke-width="4" stroke-dasharray="4 2"/>')}</button>
  <button aria-label="Aide">?</button>
  <button aria-label="Agrandir">${svg(24, 24, '0 0 24 24', '<path d="M2 22L22 2M12 2h10v10M2 12v10h10" stroke="#22323f" stroke-width="2.200"/>')}</button>
  <button aria-label="Ouvrir">${svg(24, 24, '0 0 24 24', '<path d="M3 21L21 3M9 3h12v12" stroke="#22323f" stroke-width="2.200"/>')}</button>
`);

/* ---------- digital color meter ---------- */
const PX = { r: '#fe5b57', a: '#f15a56', b: '#d95552', c: '#924a47', d: '#5a4242', e: '#443a3b', m: '#e44442', x: '#a81419', k: '#9c0a0e' };
const ROWS = [
  '..dbrrrrrrrrbd.',
  '..crrxmrrmxrrc.',
  '..brrmkmmkmrrb.',
  '..arrrmkkmrrra.',
  '..arrrmkkmrrra.',
  '..brrmkmmkmrrb.',
  '..crrxmrrmxrrc.',
  '..ebrrrrrrrrbe.',
  '...drrrrrrrrd..',
  '....ecbaabce...',
];
const pixels = ROWS.map((row, y) => [...row].map((p, x) => PX[p] ? `<rect x="${x * 16}" y="${y * 16}" width="16" height="16" fill="${PX[p]}"/>` : '').join('')).join('');
define('color-meter', `
  :host { width: 749px; height: 414px; border-radius: 12px; background: #2f2f31; border: 1px solid #000; overflow: visible; color: #e2e2e3; font: 500 22px/28px Inter, sans-serif;
    box-shadow: inset 0 0 0 2px #5d5e60, 0 36px 60px 4px rgba(0,0,0,.55), 0 0 24px rgba(0,0,0,.3); }
  header { height: 44px; background: linear-gradient(#444547, #38393b); border-bottom: 2px solid #050505; border-radius: 12px 12px 0 0; display: flex; align-items: center; padding: 2px 0 0 15px; gap: 16px; box-shadow: inset 0 2px 0 #6b6c6e; }
  header button { width: 24px; height: 24px; border-radius: 50%; display: grid; place-items: center; }
  h1 { margin: 0; flex: 1; padding-right: 122px; margin-left: -16px; text-align: center; font-weight: 400; font-size: 25px; color: #b6b6b8; }
  .body { display: grid; grid-template-columns: 240px 1fr; column-gap: 22px; padding: 24px 38px 0 23px; }
  .loupe { display: block; outline: 2px solid #57585a; outline-offset: -2px; }
  .sel { position: relative; display: block; margin: 4px 0 0 2px; width: 422px; height: 38px; border-radius: 8px; overflow: hidden; background: #656567; color: #ececec; box-shadow: inset 0 1px 0 #858587; }
  select { appearance: none; width: 100%; height: 38px; padding: 0 40px 0 17px; font-size: 25px; font-weight: 500; outline: 0; }
  .sel span { position: absolute; right: 0; top: 0; width: 32px; height: 38px; background: #1f67df; display: grid; place-items: center; pointer-events: none; }
  .vals { display: flex; gap: 24px; margin: 40px 0 0 6px; }
  .sw { width: 136px; height: 128px; background: #ff5c58; border: 2px solid #fe6a66; }
  dl { margin: 2px 0 0; display: grid; grid-template-columns: 48px auto; font-size: 25px; line-height: 42px; color: #fff; }
  dd, dt { margin: 0; }
  .ap { padding: 13px 0 0 45px; display: grid; width: 240px; }
  input { appearance: none; width: 150px; height: 34px; background: linear-gradient(#545456, #545456) 0 9px / 100% 6px no-repeat; display: block; }
  input::-webkit-slider-thumb { appearance: none; width: 30px; height: 34px; border-radius: 5px 5px 0 0; background: #cbcbcb; clip-path: polygon(0 3px, 3px 0, 27px 0, 30px 3px, 30px 18px, 17px 33px, 13px 33px, 0 18px); }
  .ticks { display: flex; width: 120px; justify-content: space-between; margin: -2px 0 0 15px; }
  .ticks i { width: 2px; height: 8px; background: #727274; }
  .ap label { margin: 5px 0 0 -45px; text-align: center; }
  .lcd { padding-top: 14px; }
`, `
  <header>
    <button aria-label="Fermer" style="background:#fe5b57">${svg(14, 14, '0 0 14 14', '<path d="M2 2l10 10M12 2L2 12" stroke="#93090d" stroke-width="2"/>')}</button>
    <button aria-label="Réduire" style="background:#e3bd3a">${svg(16, 4, '0 0 16 4', '<path d="M0 2h16" stroke="#8f5e07" stroke-width="2.400"/>')}</button>
    <button aria-label="Agrandir" style="background:#646466"></button>
    <h1>Colorimètre numérique</h1>
  </header>
  <div class="body">
    ${svg(240, 240, '0 0 240 240', `<rect width="240" height="240" fill="#3a3b3d"/>${pixels}<rect y="224" width="240" height="16" fill="#171717"/><rect x="109" y="109" width="22" height="22" stroke="#fff" stroke-width="2"/><rect x="111" y="111" width="18" height="18" stroke="#000" stroke-width="2"/>`, 'class="loupe"')}
    <div>
      <div class="sel"><select aria-label="Affichage"><option>Afficher les valeurs natives</option></select>
        <span>${svg(16, 26, '0 0 16 26', '<path d="M2 9l6-7 6 7M2 17l6 7 6-7" stroke="#fff" stroke-width="2.400"/>')}</span></div>
      <div class="vals"><div class="sw"></div><dl><dt>R :</dt><dd>252</dd><dt>V :</dt><dd>91</dd><dt>B :</dt><dd>87</dd></dl></div>
    </div>
    <div class="ap">
      <input id="ap" type="range" min="0" max="5" value="0">
      <div class="ticks"><i></i><i></i><i></i><i></i><i></i><i></i></div>
      <label for="ap">Valeur d’ouverture</label>
    </div>
    <div class="lcd">LCD couleur</div>
  </div>
`);

/* ---------- dock ---------- */
define('dock-app', `
  :host { width: 74px; height: 92px; position: relative; }
  .i { display: block; padding: 10px 5px 0 5px; }
  .dot { display: none; position: absolute; left: 33px; bottom: 4px; width: 8px; height: 8px; border-radius: 50%; background: #f1f1f5; }
  :host([run]) .dot { display: block; }
  .badge { position: absolute; left: 47px; top: 8px; color: #fff; font: 20px/27px Inter, sans-serif; background: #f6403e; border-radius: 14px; box-shadow: 0 1px 3px rgba(0,0,0,.4); text-align: center; }
  :host([wide]) .badge { left: 30px; font-size: 16px; white-space: nowrap; }
  ::slotted(b) { display: block; font-weight: 400; min-width: 27px; padding: 0 2px; box-sizing: border-box; }
`, `<span class="i"><slot></slot></span><span class="badge"><slot name="badge"></slot></span><i class="dot"></i>`);

const app = (icon, { run, badge } = {}) =>
  `<dock-app ${run ? 'run' : ''} ${badge && badge.length > 2 ? 'wide' : ''}>${svg(64, 66, '0 0 64 66', icon)}${badge ? `<b slot="badge">${badge}</b>` : ''}</dock-app>`;
const disc = (fill, ring = '#e8e8ea') => `<circle cx="32" cy="34" r="30" fill="${fill}" stroke="${ring}" stroke-width="2"/>`;
const R = { run: 1 };
const petals = ['#f89a2c', '#f4d62e', '#b4d23c', '#6fba74', '#6aa5dc', '#9a7fc6', '#d86fae', '#ee5a4a']
  .map((c, i) => `<rect x="25" y="9" width="14" height="25" rx="7" fill="${c}" opacity=".88" transform="rotate(${i * 45} 32 34)"/>`).join('');
const ringTicks = ['#c9ccd0', '#b5c4c9', '#a4c4bd', '#a9c79f', '#bfcf9a', '#c9cf8e', '#b8c46a', '#ccae46', '#e08a3c', '#ee6030', '#f0413c', '#f0568c', '#e282b4', '#d7a6d0', '#c0b6d8', '#c4c6da']
  .map((c, i) => `<rect x="28" y="12" width="8" height="8" fill="${c}" transform="rotate(${i * 22.5} 32 37)"/>`).join('');

define('mac-dock', `
  :host { height: 92px; display: flex; justify-content: center; background: linear-gradient(#97969a, #74757f); border: 2px solid #55565b; border-bottom: 0; border-radius: 10px 10px 0 0; box-shadow: inset 0 2px 0 #a9a8ac; padding-right: 2px; }
  .sep { flex: none; width: 2px; height: 44px; background: #c4c4c8; margin: 22px 16px 0; }
  .sep.l { height: 68px; margin-top: 10px; }
  .apps { display: flex; }
  dock-app { flex: none; margin-top: -2px; }
`, `
  <div class="apps">
  ${app('<path fill="#e8f1fb" d="M4 8h56v52H4z"/><path d="M4 8h29q-5 14-6 31h7v0q-1 10 1 21H4z" fill="url(#fg)"/><path d="M33 8q-5 14-6 31h8q-1 10 1 21" stroke="#14375f" stroke-width="1.500"/><path d="M14 45q17 12 36 0" stroke="#15263b" stroke-width="2"/><path d="M19 21v7M45 21v7" stroke="#15263b" stroke-width="2.400"/><defs><linearGradient id="fg" x2="0" y2="1"><stop stop-color="#2fd0fb"/><stop offset="1" stop-color="#2476ee"/></linearGradient></defs>', R)}
  ${app('<defs><radialGradient id="sg"><stop stop-color="#fff"/><stop offset=".35" stop-color="#b8d4ee" stop-opacity=".6"/><stop offset="1" stop-color="#b8d4ee" stop-opacity="0"/></radialGradient></defs>' + disc('#17133a') + '<path d="M8 28Q12 8 34 9q16 2 21 17-13-5-23 6Q20 21 8 28" fill="#b02a80" opacity=".9"/><path d="M7 42q13-1 25-8 12 9 27 2-4 22-26 23-19-1-26-17" fill="#24568f" opacity=".7"/><path d="M14 42l18-9q10 8 22 4" stroke="#4fe0cf" stroke-width="2.500"/><path d="M32 34q-2 12 6 24" stroke="#e36bc0" stroke-width="3"/><path d="M20 24l12 10q8-10 16-12" stroke="#d8e8ff" stroke-width="2"/><circle cx="32" cy="34" r="13" fill="url(#sg)"/>')}
  ${app(disc('#95a3a8', '#c6d0d4') + '<path d="M50 16q-16 0-24 15l-10 2-3 6 9 2 6 7v10l6-4 3-10q14-9 13-28" fill="#3b4245"/><circle cx="38" cy="29" r="5" fill="#a5b2b7"/><path d="M22 46l-8 3-2 8 8-2z" fill="#3b4245"/>')}
  ${app(disc('#2196e8') + '<circle cx="32" cy="34" r="24" stroke="#bfe3fb" stroke-width="3" stroke-dasharray="1 3"/><path d="M51 15L36 38l-8-7z" fill="#e8342c"/><path d="M14 53l14-22 8 7z" fill="#f2f2f2"/>', R)}
  ${app('<path d="M6 12l46-4 5 50-44 6z" fill="#fff"/><path d="M6 12l46-4 5 50-44 6z" stroke="#8f8f96" stroke-width="2" stroke-dasharray="2 2.500"/><path d="M10 16l39-4 4 42-37 6z" fill="#5a9fdc"/><path d="M15 20q10 0 17 12l9 4 11 13-6 3-9-6-5 10-7-12 1-8-8-6z" fill="#6b4425"/><path d="M36 38l6-1 2 4-6 1z" fill="#fff"/><path d="M26 56l5-3 1 5z" fill="#fff"/><circle cx="50" cy="50" r="12" stroke="#4a5568" stroke-width="1.500" opacity=".7"/>', { run: 1, badge: '9&#8239;296' })}
  ${app('<path d="M7 8l43-5 7 4-3 53-41 6-4-3z" fill="#a9783f"/><path d="M7 8l42-5-3 54-37 6z" fill="#b07f46"/><path d="M52 9h4v12h-4z" fill="#d5dde0"/><path d="M52 22h4v12h-4z" fill="#41c7e0"/><path d="M52 35h4v10h-4z" fill="#62bf4a"/><path d="M51 46h4v10h-4z" fill="#f0a02c"/><circle cx="29" cy="33" r="13" stroke="#8a5f2e" stroke-width="2"/><path d="M20 42q1-6 5-7-4-11 2-12 4-1 5 2 6 0 3 10 4 2 3 8-8 6-18-1" fill="#8f6534"/>')}
  ${app('<path d="M10 13l44-7 8 48-50 8z" fill="#56676d"/><path d="M8 10l44-6 4 48-46 6z" fill="#fbfbfb"/><path d="M8 10l44-6 1 14-44 7z" fill="#e8413f"/><g transform="rotate(-8 31 30)">' + t('JANV.', 31, 19, 12, '#fff', 400) + t('29', 32, 50, 31, '#222', 300, 'Inter') + '</g>', R)}
  ${app('<path d="M7 8l45-6 8 56-47 7z" fill="#fbfaf4"/><path d="M7 8l45-6 2 12-46 7z" fill="#f9ce3a"/><path d="M9 27l45-6M10 33l45-6M10 39l46-6M11 45l46-6M12 51l46-6M12 57l46-6" stroke="#d2cfc6" stroke-width="1"/>', R)}
  ${app('<path d="M10 8q0-3 3-3l37-3q3 0 3 3l5 50q0 4-3 4l-38 5q-3 0-3-3z" fill="#fcfcfc" stroke="#333" stroke-width="1"/><circle cx="16" cy="19" r="4" fill="#f98b1f"/><circle cx="18" cy="30" r="4" fill="#1f98f0"/><circle cx="19" cy="41" r="4" fill="#5cc93f"/><circle cx="21" cy="52" r="4" fill="#c06ce0"/><path d="M25 14l24-3M26 25l24-3M27 36l24-3M28 47l24-3" stroke="#d0d0d0"/>')}
  ${app('<path d="M3 12l50-6 4 50-46 6z" fill="#f4f0e6"/><path d="M27 9q2 20 27 20V6zM33 40l24 2v14l-24 3z" fill="#8fcf6c"/><path d="M5 28q22 2 30 30" stroke="#f9bd3d" stroke-width="7"/><path d="M18 12l5 48" stroke="#2c81d8" stroke-width="5"/><path d="M34 8q2 14 21 26" stroke="#fff" stroke-width="4"/><circle cx="21" cy="41" r="8" fill="#1f6fd0"/><path d="M21 35l4 10-4-2-4 2z" fill="#fff"/><circle cx="50" cy="47" r="14" fill="#f2f4f6" stroke="#c6cbd0"/>' + t('3D', 50, 52, 12, '#444', 400) + '<path d="M50 33l2 4h-4z" fill="#e02020"/>')}
  ${app(disc('#f2f2f0') + petals, R)}
  ${app('<path d="M33 6c17 0 30 12 30 26S50 58 33 58q-5 0-9-1-4 5-11 5 4-4 3-9Q3 46 3 32 3 6 33 6" fill="#2590f8"/><path d="M45 32c10 0 17 7 17 15q0 6-5 10 0 4 3 6-5 1-9-3-24 3-24-13c0-9 8-15 18-15" fill="#f4f8fc"/><circle cx="36" cy="47" r="3" fill="#1b5fb0"/><circle cx="45" cy="47" r="3" fill="#1b5fb0"/><circle cx="54" cy="47" r="3" fill="#1b5fb0"/>', { run: 1, badge: '1' })}
  ${app('<path d="M7 9l47-7 4 57-43 6z" fill="#fdfdfd"/><path d="M7 9l47-7 1 13-47 6z" fill="#f59425"/>' + '<text x="10" y="18" font-family="Liberation Sans" font-size="8" font-weight="700" fill="#fff">PAGES</text><path d="M13 23l20-3 2 15-20 3z" fill="#2f86d6"/><path d="M20 24l5 3 5-2-2 9h-6z" fill="#f08a24"/><path d="M37 20l16-2M37 24l16-2M38 28l15-2M16 42l30-4M16 46l30-4M17 50l30-4M17 54l30-4" stroke="#9a9a9a"/><path d="M53 2l6 2-12 42-4 16-3-2 2-14z" fill="#f2962c"/><path d="M44 46l4 1-5 16-3-1z" fill="#333"/>')}
  ${app('<path d="M9 4h46l4 22H5z" fill="#33a3ec"/><path d="M5 26h54v3H5z" fill="#1b7cc9"/><path d="M13 7h37l1 16H12z" fill="#fafafa"/><circle cx="25" cy="16" r="6" fill="#e74a8c"/><path d="M25 16v-6a6 6 0 016 6z" fill="#3cb371"/><path d="M25 16h6a6 6 0 01-6 6z" fill="#f4c02c"/><path d="M36 11h12M36 15h12M36 19h12" stroke="#bbb" stroke-width="2"/><path d="M30 29h4v31h-4z" fill="#c3d4e2"/><ellipse cx="32" cy="61" rx="14" ry="4.500" fill="#dfe8ee" stroke="#9fb2c2"/>')}
  ${app('<defs><linearGradient id="it" x2="1" y2="1"><stop stop-color="#c450f0"/><stop offset=".4" stop-color="#fb5572"/><stop offset="1" stop-color="#2fc1f5"/></linearGradient><linearGradient id="nt" x2="0" y2="1"><stop stop-color="#fb5262"/><stop offset="1" stop-color="#5477f8"/></linearGradient></defs><circle cx="32" cy="34" r="29" fill="#f3f5fb" stroke="url(#it)" stroke-width="3"/><path d="M26 21l21-5v28" stroke="url(#nt)" stroke-width="4"/><path d="M24 19l23-5v7l-23 5z" fill="#f55368"/><path d="M26 20v28" stroke="#8768d8" stroke-width="4"/><ellipse cx="21" cy="48" rx="6.500" ry="5.500" fill="#6f6ce8"/><ellipse cx="42" cy="44" rx="6.500" ry="5.500" fill="#5d70f0"/>', R)}
  ${app('<defs><linearGradient id="bk" x2="0" y2="1"><stop stop-color="#fba91c"/><stop offset="1" stop-color="#ea4b12"/></linearGradient></defs>' + disc('url(#bk)') + '<path d="M31 24q-8-6-18-2v26q10-3 18 2zM33 24q8-6 18-2v26q-10-3-18 2z" fill="#fbf6ef"/>')}
  ${app('<defs><linearGradient id="as" x2="0" y2="1"><stop stop-color="#1bc3fb"/><stop offset="1" stop-color="#1e62ee"/></linearGradient></defs>' + disc('url(#as)') + '<path d="M35 17L18 46M29 17l17 31M12 40h40" stroke="#fff" stroke-width="4.600" stroke-linecap="round"/>', { badge: '3' })}
  ${app('<path d="M3 7h58v54H3z" fill="#a9b6ba" stroke="#cdd5d8"/><circle cx="32" cy="34" r="23" fill="#2c2e30"/><circle cx="32" cy="34" r="18.500" stroke="#b6babd" stroke-width="4" stroke-dasharray="2 1.300"/><circle cx="32" cy="34" r="14.500" stroke="#b6babd" stroke-width="3.500"/><path d="M32 34l15-1M32 34l-8-13M32 34l-7 13" stroke="#b6babd" stroke-width="3"/><circle cx="32" cy="34" r="4" fill="#3a3c3e" stroke="#b6babd"/>')}
  ${app('<path d="M18 23q1-14 15-14 14 1 14 13 0 6-7 11-7 6-7 16" stroke="#c2c2c8" stroke-width="4"/><path d="M30 54h6v6h-6z" fill="#c2c2c8"/>')}
  <i class="sep"></i>
  ${app('<path d="M32 2v34l12-16z" fill="#98163b"/><path d="M32 2L20 26l12 10z" fill="#f5b22e"/><path d="M1 27l19-3 12 12-17 4z" fill="#fcd34c"/><path d="M44 23l20 4-15 13-17-4z" fill="#d9325b"/><path d="M15 40l17-4-18 30z" fill="#fbe06a"/><path d="M49 40l-17-4 20 30z" fill="#c2c2c6"/><path d="M32 36L14 66l18-14z" fill="#8a5be0"/><path d="M32 36l20 30-20-14z" fill="#2b0f72"/>', R)}
  ${app('<path d="M5 8l44-6 8 54-44 9z" fill="#2b2b2e"/><path d="M45 8l13 5 4 42-11 7-35-11 35 2z" fill="#8d60d8"/><path d="M45 8l13 5 4 42-8 5z" fill="#b58cf5"/><path d="M15 27l21 13V18L15 39z" stroke="#9a6be4" stroke-width="4"/>', R)}
  ${app('<circle cx="32" cy="34" r="31" fill="#db4437"/><path d="M5 19a31 31 0 0027 46l13-25H20z" fill="#1f9d58"/><path d="M32 65a31 31 0 0027-46H32l13 22z" fill="#fdcf43"/><circle cx="32" cy="34" r="15" fill="#f5f5f5"/><circle cx="32" cy="34" r="12" fill="#4587f3"/>', R)}
  ${app('<path d="M9 8h50v42H9z" fill="#fff"/><path d="M12 10h44v10H12z" fill="#a98859"/><path d="M1 19l48-7 8 42-50 7z" fill="#fdfdfd"/><path d="M4 21l43-6 3 17-42 10z" fill="#84b5ea"/><path d="M7 37l44-6 3 20-44 7z" fill="#2f66a8"/><path d="M8 46l20-4 6 9-24 6z" fill="#d7cdbc"/><path d="M39 44h23l-3 18q-8 5-16 0z" fill="#8d8476"/><circle cx="50" cy="43" r="11.500" fill="#6c7a86" stroke="#cfcfcf" stroke-width="2.500"/><circle cx="50" cy="43" r="6" fill="#c3ced8"/>', R)}
  ${app('<path d="M2 10l20-4 16 60-22 1z" fill="#fd2c62"/><path d="M22 0l14 6L58 0l6 10-4 42-30-10z" fill="#fc4f3a"/><path d="M2 12L24 6l14 12-32 14z" fill="#a847d6"/><path d="M14 66l36-8 4-14-34 2z" fill="#fc8030"/><path d="M14 15h39v38H14" fill="#0c0c0c"/>' + t('RM', 33, 36, 21, '#fff') + '<path d="M18 47h13" stroke="#fff" stroke-width="3"/>', R)}
  ${app('<rect x="3" y="9" width="58" height="50" rx="2" fill="#0a0a0a" stroke="#b7bcc0" stroke-width="2"/><path d="M7 13h50v42H7z" fill="#29292b"/><path d="M10 17l7 4-7 4M19 27h8" stroke="#f4f4f4" stroke-width="2.400"/>', R)}
  ${app('<rect x="3" y="9" width="58" height="50" rx="2" fill="#0a0a0a" stroke="#b7bcc0" stroke-width="2"/><path d="M7 13h50v42H7z" fill="#1b2624"/><path d="M15 13v42M24 13v42M33 13v42M42 13v42M51 13v42M7 21h50M7 29h50M7 46h50" stroke="#2c5148" stroke-width="1"/><path d="M7 39h8l3-3 3 4 4-3 3-20 4 34 3-14 4 5 4-7 3 5h11" stroke="#6fd6b8" stroke-width="1.600"/>', R)}
  ${app(disc('#15172c', '#a9adb8') + '<path d="M32 14q9 6 9 16-1 4-4 6v6H27v-6q-3-2-4-6 0-10 9-16" fill="#16a39b"/><path d="M17 20q-10 16 1 28l9 7M47 20q10 16-1 28l-9 7M22 36q-1 8 2 10l3 4M42 36q1 8-2 10l-3 4M29 40v18M35 40v18" stroke="#16a39b" stroke-width="2.400"/><circle cx="28.500" cy="38" r="2" fill="#15172c"/><circle cx="35.500" cy="38" r="2" fill="#15172c"/>', R)}
  ${app('<circle cx="32" cy="34" r="30.500" fill="#2bd864"/><path d="M13 24q20-6 39 4M15 35q17-4 32 4M17 45q14-3 26 4" stroke="#121212" stroke-width="5" stroke-linecap="round"/>', R)}
  ${app('<path d="M4 6h56v56H4z" fill="#f6f6f6"/><path d="M4 6h38l-5 10-27 12H4z" fill="#6fc7d8"/><path d="M4 25h8l10 29-18 6z" fill="#46b588"/><path d="M46 6h14v36l-6 3z" fill="#eaa82c"/><path d="M60 42v20H22l-3-7z" fill="#d91c47"/><path d="M4 62v-5l15-5 4 10z" fill="#35132e"/>' + t('S', 32, 45, 30, '#111', 700, 'Inter'), { run: 1, badge: '1' })}
  ${app(disc('#5268c0', '#f4f4f6') + '<path d="M17 24q6-5 11-4l1 2h7l1-2q6 0 11 4 6 11 5 22-5 4-10 5l-3-5q3-1 4-3-12 6-24 0 2 2 4 3l-3 5q-5-1-9-5-1-12 5-22" fill="#fff"/><circle cx="26" cy="36" r="3.800" fill="#5268c0"/><circle cx="38" cy="36" r="3.800" fill="#5268c0"/>', { run: 1, badge: '5' })}
  ${app('<circle cx="32" cy="37" r="27" fill="#222" stroke="#e6e6e6" stroke-width="2"/>' + ringTicks + '<circle cx="32" cy="37" r="15" fill="#242424"/><path d="M15 54q0-5 4-9l18-21 6 5-20 20q-4 3-8 5" fill="#e6e6e8"/><path d="M15 54q0-5 4-9l9-9 5 4-10 9q-4 3-8 5" fill="#e8382e"/><path d="M42 18l10-12q6-5 10-1 3 4-1 9L50 26l2 3-4 3-10-11 3-4z" fill="#24384d"/>', R)}
  <i class="sep l"></i>
  ${app('<path d="M9 10h48l-5 53q-19 7-38 0z" fill="#5c6164"/><path d="M15 12h9l2 50-8-2zM36 12h10l-4 50h-6z" fill="#74797c"/><path d="M9 4l10-3 6 5 6-5 8 4 8-3 9 8v6q-23 5-48 0z" fill="#d9dadb"/><path d="M14 5l6 7 5-4 5 6 6-9 6 8 9-4" stroke="#55595c" stroke-width="2"/><circle cx="25" cy="8" r="2.500" fill="#5a7d58"/><circle cx="37" cy="10" r="2.500" fill="#3f88b8"/><circle cx="49" cy="7" r="2" fill="#b5492e"/><ellipse cx="33" cy="12" rx="24" ry="4" stroke="#8a8f92" stroke-width="1.500"/>')}
  </div>
`);
</script>
</body>
</html>
